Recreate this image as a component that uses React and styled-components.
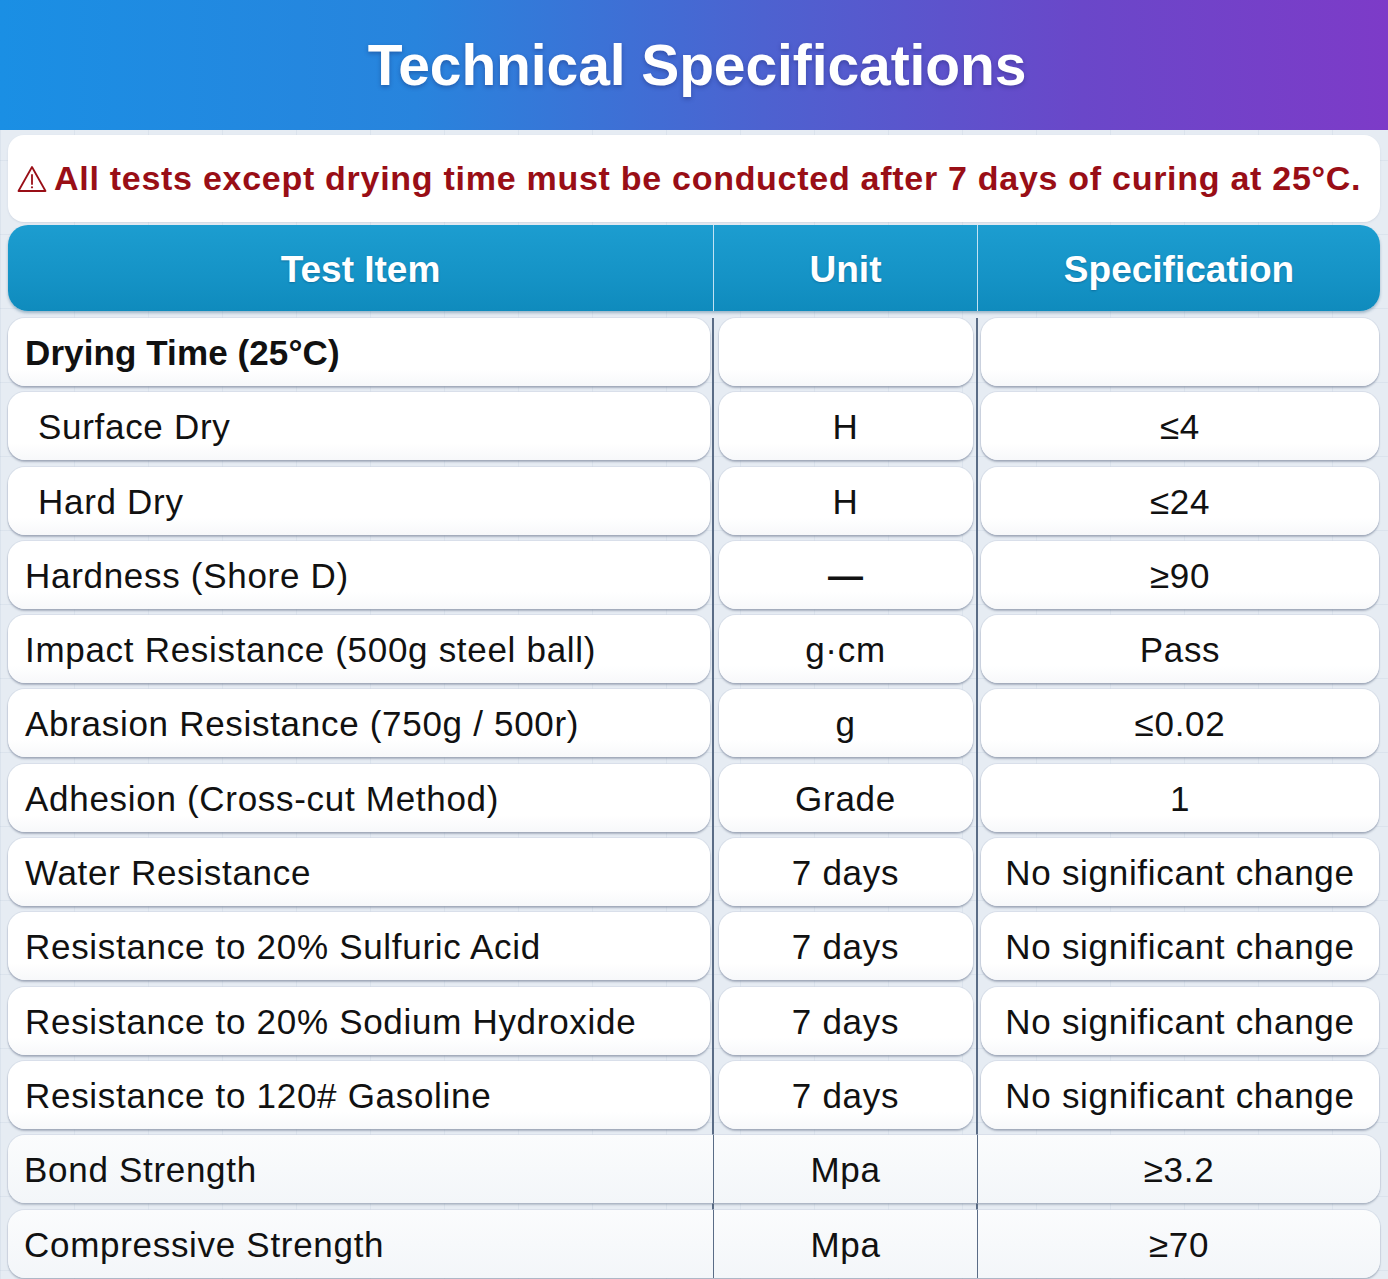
import React from 'react';
import styled, { createGlobalStyle } from 'styled-components';

const GlobalStyle = createGlobalStyle`
  html, body {
    margin: 0;
    padding: 0;
  }
  body {
    background: #e4ebf2;
    font-family: "Liberation Sans", Arial, sans-serif;
    overflow: hidden;
  }
`;

const Page = styled.div`
  width: 1388px;
  min-height: 1279px;
  background-color: #e6ecf3;
  background-image:
    linear-gradient(rgba(150, 170, 195, 0.14) 1px, transparent 1px),
    linear-gradient(90deg, rgba(150, 170, 195, 0.14) 1px, transparent 1px);
  background-size: 74px 74px;
  background-position: 0 160px;
`;

const Banner = styled.header`
  height: 130px;
  display: flex;
  align-items: center;
  justify-content: center;
  background: linear-gradient(90deg, #1a8fe4 0%, #2884dd 30%, #4d62d0 55%, #6a47c9 78%, #7d3bc8 100%);
`;

const Title = styled.h1`
  margin: 0;
  color: #fff;
  font-size: 57px;
  font-weight: 700;
  letter-spacing: -0.1px;
  padding-left: 6px;
  text-shadow: 0 2px 4px rgba(20, 30, 90, 0.35);
`;

const Content = styled.main`
  padding: 5px 8px 0 8px;
  display: flex;
  flex-direction: column;
`;

const Notice = styled.div`
  height: 87px;
  background: #fff;
  border-radius: 16px;
  display: flex;
  align-items: center;
  gap: 7px;
  padding-left: 9px;
  box-shadow: 0 1px 2px rgba(90, 110, 140, 0.15);
`;

const NoticeText = styled.p`
  margin: 0;
  color: #990e16;
  font-size: 34px;
  font-weight: 700;
  letter-spacing: 0.72px;
`;

const HeadRow = styled.div`
  margin-top: 3px;
  height: 86px;
  display: grid;
  grid-template-columns: 705px 264px 1fr;
  border-radius: 20px;
  overflow: hidden;
  background: linear-gradient(180deg, #1c9dd0 0%, #1593c6 60%, #0f8bbd 100%);
  box-shadow: 0 2px 3px rgba(20, 80, 120, 0.35);
`;

const HeadCell = styled.div`
  display: flex;
  align-items: center;
  justify-content: center;
  padding-top: 3px;
  color: #fff;
  font-size: 37px;
  font-weight: 700;
  text-shadow: 0 1px 2px rgba(0, 40, 80, 0.3);
  border-left: ${p => (p.$first ? 'none' : '1.5px solid rgba(225, 240, 250, 0.85)')};
`;

const Rows = styled.div`
  margin-top: 7px;
  display: flex;
  flex-direction: column;
  gap: 6.3px;
  background-image:
    linear-gradient(90deg, transparent 704.5px, #5a6c86 704.5px, #5a6c86 706px, transparent 706px),
    linear-gradient(90deg, transparent 968.5px, #5a6c86 968.5px, #5a6c86 970px, transparent 970px);
`;

const Row = styled.div`
  display: grid;
  grid-template-columns: 702px 254px 398px;
  column-gap: 8.5px;
  height: 68px;
`;

const Cell = styled.div`
  background: linear-gradient(180deg, #ffffff 0%, #ffffff 75%, #f7f8fa 100%);
  border-radius: 17px;
  box-shadow: 0 2px 2px rgba(70, 85, 110, 0.38), 0 0 0 1px rgba(205, 214, 226, 0.55);
  display: flex;
  align-items: center;
  justify-content: ${p => (p.$center ? 'center' : 'flex-start')};
  padding-left: ${p => (p.$center ? '0' : p.$indent ? '30px' : '17px')};
  padding-top: 2px;
  color: #111;
  font-size: 35px;
  font-weight: ${p => (p.$bold ? 700 : 400)};
  letter-spacing: ${p => (p.$bold ? '0.1px' : '0.7px')};
  white-space: nowrap;
`;

const WideRow = styled.div`
  display: grid;
  grid-template-columns: 705px 264px 1fr;
  height: 68px;
  border-radius: 17px;
  background: linear-gradient(180deg, #fbfcfd 0%, #f3f6f9 100%);
  box-shadow: 0 2px 2px rgba(70, 85, 110, 0.3), 0 0 0 1px rgba(205, 214, 226, 0.55);
`;

const WideCell = styled.div`
  display: flex;
  align-items: center;
  justify-content: ${p => (p.$center ? 'center' : 'flex-start')};
  padding-left: ${p => (p.$center ? '0' : '16px')};
  padding-top: 2px;
  color: #111;
  font-size: 35px;
  letter-spacing: 0.7px;
  white-space: nowrap;
  border-left: ${p => (p.$first ? 'none' : '1.5px solid #5a6c86')};
`;

const WarnIcon = () => (
  <svg width="30" height="28" viewBox="0 0 30 28" aria-hidden="true">
    <path d="M15 2 L28.5 26 L1.5 26 Z" fill="none" stroke="#990e16" strokeWidth="1.8" strokeLinejoin="round" />
    <path d="M15 10 L15 19" stroke="#990e16" strokeWidth="1.8" strokeLinecap="round" />
    <circle cx="15" cy="22.3" r="1.1" fill="#990e16" />
  </svg>
);

const specs = [
  { item: 'Drying Time (25°C)', unit: '', spec: '', bold: true },
  { item: 'Surface Dry', unit: 'H', spec: '≤4', indent: true },
  { item: 'Hard Dry', unit: 'H', spec: '≤24', indent: true },
  { item: 'Hardness (Shore D)', unit: '—', spec: '≥90' },
  { item: 'Impact Resistance (500g steel ball)', unit: 'g·cm', spec: 'Pass' },
  { item: 'Abrasion Resistance (750g / 500r)', unit: 'g', spec: '≤0.02' },
  { item: 'Adhesion (Cross-cut Method)', unit: 'Grade', spec: '1' },
  { item: 'Water Resistance', unit: '7 days', spec: 'No significant change' },
  { item: 'Resistance to 20% Sulfuric Acid', unit: '7 days', spec: 'No significant change' },
  { item: 'Resistance to 20% Sodium Hydroxide', unit: '7 days', spec: 'No significant change' },
  { item: 'Resistance to 120# Gasoline', unit: '7 days', spec: 'No significant change' },
];

const strength = [
  { item: 'Bond Strength', unit: 'Mpa', spec: '≥3.2' },
  { item: 'Compressive Strength', unit: 'Mpa', spec: '≥70' },
];

export default function App() {
  return (
    <>
      <GlobalStyle />
      <Page>
        <Banner>
          <Title>Technical Specifications</Title>
        </Banner>
        <Content>
          <Notice>
            <WarnIcon />
            <NoticeText>All tests except drying time must be conducted after 7 days of curing at 25°C.</NoticeText>
          </Notice>

          <HeadRow>
            <HeadCell $first>Test Item</HeadCell>
            <HeadCell>Unit</HeadCell>
            <HeadCell>Specification</HeadCell>
          </HeadRow>

          <Rows>
            {specs.map(r => (
              <Row key={r.item}>
                <Cell $bold={r.bold} $indent={r.indent}>{r.item}</Cell>
                <Cell $center $bold={r.unit === '—'}>{r.unit}</Cell>
                <Cell $center>{r.spec}</Cell>
              </Row>
            ))}
            {strength.map(r => (
              <WideRow key={r.item}>
                <WideCell $first>{r.item}</WideCell>
                <WideCell $center>{r.unit}</WideCell>
                <WideCell $center>{r.spec}</WideCell>
              </WideRow>
            ))}
          </Rows>
        </Content>
      </Page>
    </>
  );
}
